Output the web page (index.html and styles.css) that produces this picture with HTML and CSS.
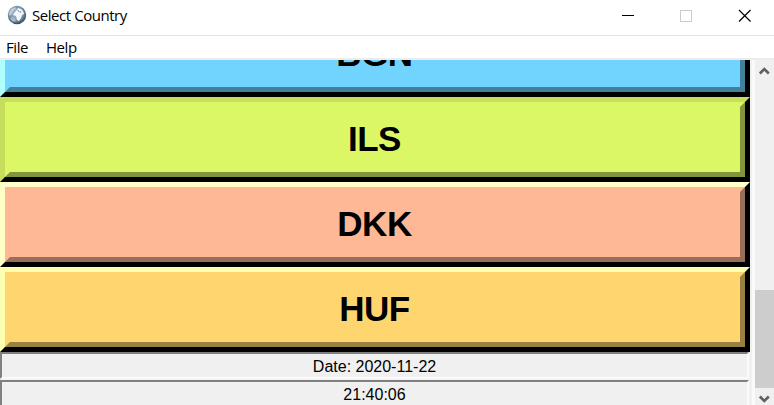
FILE: index.html
```html
<!DOCTYPE html>
<html lang="en">
<head>
<meta charset="utf-8">
<title>Select Country</title>
<link rel="stylesheet" href="styles.css">
</head>
<body>
<header class="titlebar">
  <svg class="globe" width="20" height="20" viewBox="0 0 20 20">
    <defs>
      <radialGradient id="sea" cx=".45" cy=".4" r=".6">
        <stop offset="0" stop-color="#a9c0d3"/><stop offset=".65" stop-color="#7892a8"/><stop offset="1" stop-color="#334b62"/>
      </radialGradient>
    </defs>
    <circle cx="10" cy="10" r="9.2" fill="url(#sea)"/>
    <path d="M2 8l2-4 4-2 1 2-3 2-1 3-3 2z" fill="#bdcbd7"/>
    <path d="M8 7l2-2 1-2 3 1 2 2 1 3-2 1-1 3-2 3-2-1-1-4-3-1z" fill="#f4f7f9"/>
    <path d="M3 13l4-1 2 3-1 2-3-1z" fill="#a5bacb"/>
    <path d="M11 5l1 2M14 6l-1 2" stroke="#7892a8" fill="none"/>
  </svg>
  <h1 class="title">Select Country</h1>
  <div class="controls">
    <svg width="46" height="35" viewBox="0 0 46 35" shape-rendering="crispEdges"><path d="M14 15.5h12" stroke="#000"/></svg>
    <svg width="59" height="35" viewBox="0 0 59 35" shape-rendering="crispEdges"><path d="M26.500 10.500h11v11h-11z" fill="none" stroke="#ccc"/></svg>
    <svg width="61" height="35" viewBox="0 0 61 35"><path d="M26 10l11.500 11.500M37.500 10L26 21.500" stroke="#000" stroke-width="1.200"/></svg>
  </div>
</header>
<nav class="menubar"><span class="file">File</span><span class="help">Help</span></nav>
<main class="body">
  <div class="list">
    <button class="currency bgn"><span>BGN</span></button>
    <button class="currency ils"><span>ILS</span></button>
    <button class="currency dkk"><span>DKK</span></button>
    <button class="currency huf"><span>HUF</span></button>
    <div class="status">Date: 2020-11-22</div>
    <div class="status">21:40:06</div>
  </div>
  <div class="scrollbar">
    <svg width="19" height="19" viewBox="0 0 19 19"><path d="M4.800 13.500L9.300 9l4.500 4.500" fill="none" stroke="#606060" stroke-width="2.600"/></svg>
    <div class="track"><div class="thumb"></div></div>
    <svg width="19" height="17" viewBox="0 0 19 17"><path d="M4.800 8.500L9.300 13l4.500-4.500" fill="none" stroke="#606060" stroke-width="2.600"/></svg>
  </div>
</main>
</body>
</html>
```
FILE: styles.css
```css
* { box-sizing: border-box; }
body {
  margin: 0;
  height: 405px;
  overflow: hidden;
  display: flex;
  flex-direction: column;
  background: #fff;
  color: #000;
}
.titlebar {
  height: 36px;
  flex: none;
  display: flex;
  border-bottom: 1px solid #e2e2e2;
}
.globe { margin: 5px 5px 0 7px; }
.title {
  margin: 0;
  font: 400 15px/31px "Open Sans", sans-serif;
  letter-spacing: -0.45px;
}
.controls { display: flex; margin-left: auto; }
.controls svg { display: block; }
.menubar {
  height: 22px;
  flex: none;
  display: flex;
  padding-left: 6px;
  font: 400 15px/23px "Open Sans", sans-serif;
  letter-spacing: -0.45px;
}
.file { width: 40px; }
.body {
  flex: 1;
  min-height: 0;
  display: flex;
  background: #f0f0f0;
  border-top: 2px solid #ececec;
}
.list {
  width: 750px;
  height: 345px;
  overflow: hidden;
  display: flex;
  flex-direction: column;
  justify-content: flex-end;
}
.currency {
  flex: none;
  display: flex;
  width: 750px;
  height: 85px;
  padding: 0;
  border: 5px solid;
  border-color: var(--light) #000 #000 var(--light);
  background: var(--fill);
  color: #000;
  font: 700 35px/1 "Liberation Sans", sans-serif;
  letter-spacing: -0.5px;
}
.currency span {
  flex: 1;
  height: 75px;
  display: flex;
  align-items: center;
  justify-content: center;
  padding: 0 1px 2px 0;
  border: 5px solid;
  border-color: var(--fill) var(--dark) var(--dark) var(--fill);
}
.bgn { --fill: #70d4ff; --light: #b0ffff; --dark: #438099; }
.ils { --fill: #dcf765; --light: #c6de5b; --dark: #84943d; }
.dkk { --fill: #ffb895; --light: #ffffc8; --dark: #996e59; }
.huf { --fill: #ffd56f; --light: #ffffb0; --dark: #998043; }
.status {
  flex: none;
  width: 749px;
  height: 27px;
  margin-bottom: 1px;
  border: 2px solid;
  border-color: #808080 #fafafa #fafafa #808080;
  text-align: center;
  font: 16px/25px "Liberation Sans", sans-serif;
}
.status:last-child { margin-bottom: -2px; }
.scrollbar {
  width: 19px;
  margin-left: 5px;
  display: flex;
  flex-direction: column;
  box-shadow: -3px 0 #fafafa;
}
.scrollbar svg { flex: none; }
.track { flex: 1; display: flex; align-items: flex-end; }
.thumb { width: 19px; height: 98px; background: #cdcdcd; }
```
